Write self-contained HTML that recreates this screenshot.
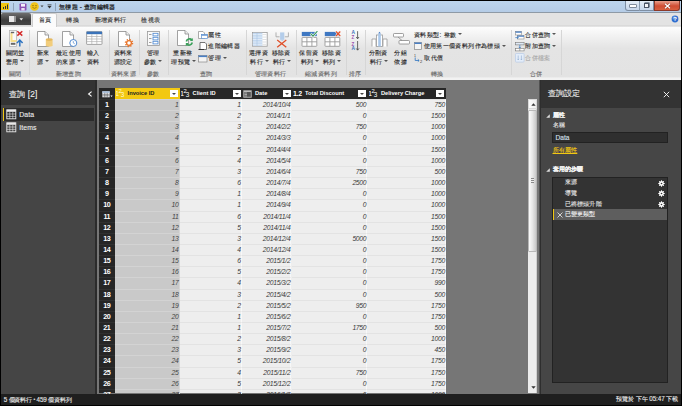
<!DOCTYPE html>
<html><head><meta charset="utf-8">
<style>
*{margin:0;padding:0;box-sizing:border-box}
html,body{width:682px;height:406px;overflow:hidden;background:#000;font-family:"Liberation Sans",sans-serif}
.a{position:absolute}
#title{left:1px;top:1px;width:680px;height:12px;background:linear-gradient(#bdd5ed,#b5cce7);border-bottom:1.2px solid #8e9aa6}
#tabs{left:1px;top:13px;width:680px;height:14px;background:linear-gradient(#e3e3e3 0,#e3e3e3 85%,#d6d6d6 86%,#e8e8e8)}
#ribbon{left:1px;top:27px;width:680px;height:53px;background:linear-gradient(#fdfdfd 0,#f3f3f3 15%,#e4e4e4 40%,#e3e3e3 95%,#f2f2f2 95.5%,#f2f2f2)}
#left{left:1px;top:80px;width:95px;height:314px;background:#454545}
#lefthd{left:1px;top:80px;width:95px;height:25px;background:#333}
#lsep{left:95px;top:80px;width:2px;height:314px;background:#2b2b2b}
#mid{left:97px;top:80px;width:442px;height:314px;background:#767676}
#right{left:541px;top:80px;width:140px;height:314px;background:#464646}
#righthd{left:541px;top:80px;width:140px;height:27.6px;background:#333}
#rsep{left:539px;top:80px;width:2px;height:314px;background:linear-gradient(90deg,#505050 50%,#2e2e2e 50%)}
#status{left:1px;top:394px;width:680px;height:10.8px;background:#1f1f1f}
#rncol{left:99px;top:88px;width:15.5px;height:305px;background:#262626}
#hdr{left:99px;top:88px;width:347px;height:11px;background:#272727}
#datacol{left:114.5px;top:99px;width:331.5px;height:294px;background:#eeeeee}
#selcol{left:114.5px;top:99px;width:65.1px;height:294px;background:#c9c9c9}
.rn{position:absolute;left:99px;width:15.5px;height:11.15px;color:#fff;font-weight:bold;font-size:7.2px;letter-spacing:-0.5px;line-height:10.5px;text-align:center;border-top:1px solid #303030}
.c{position:absolute;height:11.15px;font-style:italic;font-size:6.8px;letter-spacing:-0.3px;line-height:10.3px;color:#3a3a3a;text-align:right;padding-right:0.1px;border-top:1px solid #e3e3e3;border-right:1px solid #f8f8f8}
.c.sel{color:#444;border-top-color:#d3d3d3;border-right-color:#d6d6d6}
.hc{position:absolute;top:88px;height:11px;color:#fff;font-weight:bold;font-size:5.7px;line-height:11px;white-space:nowrap}
.dd{position:absolute;top:90px;width:8px;height:7px;background:#fff}
.dd:after{content:"";position:absolute;left:2px;top:2.5px;border-left:2px solid transparent;border-right:2px solid transparent;border-top:2px solid #444}
.t{position:absolute;white-space:nowrap;font-size:6.3px;letter-spacing:0.4px;line-height:8px;color:#2a2a2a;-webkit-text-stroke:0.12px currentColor}
.t.g{color:#6a6a6a}
.ddt{display:inline-block;width:0;height:0;border-left:2px solid transparent;border-right:2px solid transparent;border-top:2px solid #555;margin-left:1.5px;vertical-align:1.5px}
.sep{position:absolute;top:30px;width:1px;height:45px;background:#d6d6d6}
</style></head><body>
<div class="a" id="title"></div>
<div class="a" id="tabs"></div>
<div class="a" id="ribbon"></div>

<!-- title bar -->
<div class="a" style="left:1px;top:3px;width:8px;height:7px;background:#f2c811"></div>
<svg class="a" style="left:1px;top:3px" width="8" height="7"><rect x="2" y="4" width="1" height="2" fill="#333"/><rect x="4" y="3" width="1" height="3" fill="#333"/><rect x="6" y="1.5" width="1" height="4.5" fill="#333"/></svg>
<div class="a" style="left:13px;top:3px;width:1px;height:8px;background:#8fa3b8"></div>
<svg class="a" style="left:19px;top:3px" width="8" height="8"><rect x="0.5" y="0.5" width="7" height="7" rx="0.8" fill="#8b4fb3"/><rect x="2" y="1" width="4" height="2.6" fill="#f4eefa"/><rect x="2.3" y="5" width="3.4" height="2.5" fill="#e8def2"/></svg>
<svg class="a" style="left:30px;top:2px" width="9" height="9"><circle cx="4.5" cy="4.5" r="4.3" fill="#f0c419"/><circle cx="3" cy="3.6" r="0.6" fill="#7a5a00"/><circle cx="6" cy="3.6" r="0.6" fill="#7a5a00"/><path d="M2.4 5.3 Q4.5 7.4 6.6 5.3" stroke="#7a5a00" stroke-width="0.6" fill="none"/></svg>
<svg class="a" style="left:40px;top:5px" width="4" height="3"><path d="M0.5 0.5 L3.5 0.5 L2 2.3Z" fill="#444"/></svg>
<svg class="a" style="left:47px;top:4px" width="5" height="5"><rect x="0.5" y="0.5" width="4" height="0.8" fill="#333"/><path d="M0.5 2 L4.5 2 L2.5 4.5Z" fill="#333"/></svg>
<div class="a" style="left:55px;top:3px;width:1px;height:8px;background:#8fa3b8"></div>
<div class="t" style="left:59px;top:2.7px;font-size:6.4px;line-height:8px;letter-spacing:0.25px;color:#111;-webkit-text-stroke:0.18px #111">無標題 - 查詢編輯器</div>
<div class="a" style="left:625px;top:1px;width:29px;height:10px;border:1px solid #7d8ea3;border-top:none;border-radius:0 0 0 3px;background:linear-gradient(#e4edf7,#c6d6ea)"></div>
<div class="a" style="left:639px;top:1px;width:1px;height:9.5px;background:#8a9cb0"></div>
<div class="a" style="left:629.5px;top:5px;width:6px;height:2px;background:#fff;box-shadow:0 0 0 0.6px #4a5566"></div>
<div class="a" style="left:643.5px;top:2.5px;width:5.5px;height:5.5px;border:1px solid #4a5566;background:#f4f6fa;box-shadow:0.6px -0.6px 0 #4a5566"></div>
<div class="a" style="left:654px;top:1px;width:25.5px;height:10px;border:1px solid #8d3a2a;border-top:none;border-radius:0 0 3px 0;background:linear-gradient(#eaa08c,#cf4d33 55%,#d8603f)"></div>
<svg class="a" style="left:663.5px;top:2.5px" width="7" height="6"><path d="M1 0.8 L6 5.2 M6 0.8 L1 5.2" stroke="#5a2015" stroke-width="2.2" stroke-opacity="0.5"/><path d="M1 0.8 L6 5.2 M6 0.8 L1 5.2" stroke="#fff" stroke-width="1.3"/></svg>
<!-- tabs -->
<div class="a" style="left:1px;top:13px;width:30px;height:12px;background:linear-gradient(#6e6e6e,#3e3e3e 60%,#474747);border-radius:2px 2px 0 0"></div>
<div class="a" style="left:9px;top:16px;width:7px;height:6px;background:#e8e8e8;border-right:2px solid #999"></div>
<svg class="a" style="left:19px;top:18px" width="5" height="3"><path d="M0.5 0.3 L4 0.3 L2.25 2.5Z" fill="#eee"/></svg>
<div class="a" style="left:32px;top:13px;width:25px;height:14px;background:#fbfbfb;border:1px solid #cdcdcd;border-bottom:none;border-radius:2px 2px 0 0"></div>
<div class="t" style="left:38.5px;top:15.5px;font-size:6.3px;color:#333">首頁</div>
<div class="t" style="left:66.4px;top:15.5px;font-size:6.3px;color:#333">轉換</div>
<div class="t" style="left:94.6px;top:15.5px;font-size:6.3px;color:#333">新增資料行</div>
<div class="t" style="left:141.3px;top:15.5px;font-size:6.3px;color:#333">檢視表</div>
<svg class="a" style="left:671px;top:15px" width="8" height="8"><circle cx="4" cy="4" r="3.4" fill="#2f6fd0"/><circle cx="3.3" cy="3" r="1.8" fill="#8fb8f0" opacity="0.6"/><text x="4" y="6.3" font-size="6" font-weight="bold" fill="#fff" text-anchor="middle" font-family="Liberation Sans">?</text></svg>

<div class="sep" style="left:29px"></div>
<div class="sep" style="left:108.5px"></div>
<div class="sep" style="left:138.7px"></div>
<div class="sep" style="left:167.5px"></div>
<div class="sep" style="left:245.5px"></div>
<div class="sep" style="left:295.7px"></div>
<div class="sep" style="left:346.4px"></div>
<div class="sep" style="left:364.7px"></div>
<div class="sep" style="left:510.5px"></div>
<div class="sep" style="left:561.3px"></div>
<svg class="a" style="left:9px;top:30px" width="15" height="17">
<rect x="0.5" y="0.5" width="7" height="16" fill="#fafafa" stroke="#b5b5b5" stroke-width="0.8"/>
<path d="M1.5 3 L3.5 3 L3.5 10 L7.5 10 L7.5 12 L1.5 12Z" fill="#f7df8a"/>
<rect x="1.8" y="1.8" width="3.4" height="1.4" fill="#666"/>
<rect x="1.8" y="12.8" width="4.6" height="2" fill="#666"/>
<path d="M8.3 1.2 L13.3 5.6 M13.3 1.2 L8.3 5.6" stroke="#d42a2a" stroke-width="1.5"/>
<path d="M10.8 16.5 L10.8 10.5 M8 13 L10.8 10 L13.6 13" stroke="#2f74c0" stroke-width="1.5" fill="none"/>
</svg>
<div class="t" style="left:-14.8px;top:49.3px;width:60px;text-align:center;">關閉並</div>
<div class="t" style="left:-14.8px;top:57.5px;width:60px;text-align:center;">套用<span class="ddt"></span></div>
<div class="t g" style="left:-14.5px;top:69.5px;width:60px;text-align:center;">關閉</div>
<svg class="a" style="left:37px;top:30.5px" width="16" height="17">
<path d="M0.5 0.5 L8 0.5 L11.5 4 L11.5 15.5 L0.5 15.5Z" fill="#fff" stroke="#8a8a8a" stroke-width="0.8"/>
<path d="M8 0.5 L8 4 L11.5 4" fill="#eee" stroke="#8a8a8a" stroke-width="0.8"/><path d="M8.8 8.6 V15 Q12.2 16.6 15.6 15 V8.6Z" fill="#f2cd7c"/><ellipse cx="12.2" cy="8.6" rx="3.4" ry="1.3" fill="#e4b85e"/></svg>
<div class="t" style="left:13px;top:49.3px;width:60px;text-align:center;">新來</div>
<div class="t" style="left:13px;top:57.5px;width:60px;text-align:center;">源<span class="ddt"></span></div>
<svg class="a" style="left:62px;top:30.5px" width="16" height="17">
<path d="M0.5 0.5 L8 0.5 L11.5 4 L11.5 15.5 L0.5 15.5Z" fill="#fff" stroke="#8a8a8a" stroke-width="0.8"/>
<path d="M8 0.5 L8 4 L11.5 4" fill="#eee" stroke="#8a8a8a" stroke-width="0.8"/><circle cx="11.3" cy="12" r="3.5" fill="#fff" stroke="#3d7cc9" stroke-width="0.9"/><path d="M11.3 10 L11.3 12 L12.8 12.8" stroke="#3d7cc9" stroke-width="0.6" fill="none"/></svg>
<div class="t" style="left:38.599999999999994px;top:49.3px;width:60px;text-align:center;">最近使用</div>
<div class="t" style="left:38.2px;top:57.5px;width:60px;text-align:center;">的來源<span class="ddt"></span></div>
<svg class="a" style="left:85.8px;top:31px" width="17" height="14">
<rect x="0.6" y="0.6" width="15.4" height="12.8" rx="0.5" fill="#fff" stroke="#9a9a9a" stroke-width="0.9"/>
<rect x="0.6" y="0.6" width="15.4" height="2.6" fill="#3b73b9"/>
<path d="M0.6 5.5 H16 M0.6 8 H16 M0.6 10.6 H16 M5.8 3.2 V13.4 M10.8 3.2 V13.4" stroke="#b0b0b0" stroke-width="0.7"/>
</svg>
<div class="t" style="left:63.5px;top:49.3px;width:60px;text-align:center;">輸入</div>
<div class="t" style="left:63.5px;top:57.5px;width:60px;text-align:center;">資料</div>
<div class="t g" style="left:38.5px;top:69.5px;width:60px;text-align:center;">新增查詢</div>
<svg class="a" style="left:117.5px;top:30.5px" width="16" height="17">
<path d="M0.5 0.5 L8 0.5 L11.5 4 L11.5 15.5 L0.5 15.5Z" fill="#fff" stroke="#8a8a8a" stroke-width="0.8"/>
<path d="M8 0.5 L8 4 L11.5 4" fill="#eee" stroke="#8a8a8a" stroke-width="0.8"/><circle cx="11" cy="12" r="2.4" fill="#fff" stroke="#e8742a" stroke-width="1.3"/><circle cx="11" cy="12" r="3.5" fill="none" stroke="#e8742a" stroke-width="1.5" stroke-dasharray="1.3 1.45"/></svg>
<div class="t" style="left:93.3px;top:49.3px;width:60px;text-align:center;">資料來</div>
<div class="t" style="left:93.3px;top:57.5px;width:60px;text-align:center;">源設定</div>
<div class="t g" style="left:93.5px;top:69.5px;width:60px;text-align:center;">資料來源</div>
<svg class="a" style="left:147px;top:31px" width="13" height="15">
<rect x="0.5" y="0.5" width="12" height="14" fill="#fafafa" stroke="#9a9a9a" stroke-width="0.8"/>
<path d="M2 3.5 H4.5 M2 7.5 H4.5 M2 11.5 H4.5" stroke="#888" stroke-width="0.8"/>
<rect x="6" y="2.3" width="5" height="2.6" fill="#fff" stroke="#4a86d0" stroke-width="0.8"/>
<rect x="6" y="6.3" width="5" height="2.6" fill="#fff" stroke="#4a86d0" stroke-width="0.8"/>
<rect x="6" y="10.3" width="5" height="2.6" fill="#fff" stroke="#4a86d0" stroke-width="0.8"/>
</svg>
<div class="t" style="left:123.19999999999999px;top:49.3px;width:60px;text-align:center;">管理</div>
<div class="t" style="left:123.19999999999999px;top:57.5px;width:60px;text-align:center;">參數<span class="ddt"></span></div>
<div class="t g" style="left:123.5px;top:69.5px;width:60px;text-align:center;">參數</div>
<svg class="a" style="left:176.5px;top:30px" width="16" height="17">
<path d="M0.5 0.5 L8 0.5 L11.5 4 L11.5 15.5 L0.5 15.5Z" fill="#fff" stroke="#8a8a8a" stroke-width="0.8"/>
<path d="M8 0.5 L8 4 L11.5 4" fill="#eee" stroke="#8a8a8a" stroke-width="0.8"/><path d="M9.3 11.5 A3.3 3.3 0 0 1 15 10 M15.3 12.5 A3.3 3.3 0 0 1 9.6 14" stroke="#3aa05a" stroke-width="1.6" fill="none"/><path d="M15.8 8 L15.8 11 L12.8 11Z M8.8 16.3 L8.8 13 L11.8 13Z" fill="#3aa05a"/></svg>
<div class="t" style="left:153px;top:49.3px;width:60px;text-align:center;">重新整</div>
<div class="t" style="left:153.5px;top:57.5px;width:60px;text-align:center;">理預覽<span class="ddt"></span></div>
<svg class="a" style="left:198px;top:31px" width="10" height="8"><path d="M0.5 0.5 H5 L6.5 2 V7.5 H0.5Z" fill="#fff" stroke="#888" stroke-width="0.7"/><rect x="3.5" y="3.5" width="6" height="4" fill="#fff" stroke="#5b8fd0" stroke-width="0.7"/><rect x="3.5" y="3.5" width="6" height="1.2" fill="#5b8fd0"/></svg>
<div class="t" style="left:208.3px;top:30.5px">屬性</div>
<svg class="a" style="left:198px;top:42px" width="10" height="8"><path d="M2 0.5 H7 L8.5 2 V7.5 H2Z" fill="#fff" stroke="#555" stroke-width="0.8"/><path d="M0.5 7.5 H6" stroke="#333" stroke-width="1"/></svg>
<div class="t" style="left:208.3px;top:41.7px">進階編輯器</div>
<svg class="a" style="left:198px;top:54.5px" width="10" height="8"><rect x="0.5" y="0.5" width="8.5" height="6.5" fill="#f4f4f4" stroke="#888" stroke-width="0.7"/><rect x="0.5" y="0.5" width="8.5" height="1.6" fill="#4a7fc4"/></svg>
<div class="t" style="left:208.3px;top:54px">管理<span class="ddt"></span></div>
<div class="t g" style="left:176.3px;top:69.5px;width:60px;text-align:center;">查詢</div>
<svg class="a" style="left:251.5px;top:31.5px" width="16" height="15">
<rect x="0.4" y="0.4" width="14.8" height="13.8" fill="#fff" stroke="#9a9a9a" stroke-width="0.8"/>
<rect x="0.8" y="0.8" width="9.6" height="13" fill="#c3d8f0"/>
<path d="M0.8 2.6 H14.8 M0.8 5.1 H14.8 M0.8 7.5 H14.8 M0.8 10 H14.8 M0.8 12.3 H14.8" stroke="#f4f8fd" stroke-width="0.6"/>
<path d="M10.4 2.6 H14.8 M10.4 5.1 H14.8 M10.4 7.5 H14.8 M10.4 10 H14.8 M10.4 12.3 H14.8" stroke="#d0d0d0" stroke-width="0.6"/>
<path d="M5 0.8 V13.8" stroke="#a9c2e0" stroke-width="0.6"/>
</svg>
<div class="t" style="left:228.7px;top:49.3px;width:60px;text-align:center;">選擇資</div>
<div class="t" style="left:229.5px;top:57.5px;width:60px;text-align:center;">料行<span class="ddt"></span></div>
<svg class="a" style="left:274.5px;top:30.5px" width="15" height="17">
<path d="M1 1.4 V5.8 H4.6 M13.4 1.4 V5.8 H9.8" stroke="#a8a8a8" stroke-width="0.9" fill="none"/>
<rect x="5.1" y="1.4" width="4.2" height="7" fill="#b4cdea"/>
<path d="M4.6 8.2 H9.8 L7.2 10Z" fill="#b4cdea"/>
<path d="M2.2 9 L11.3 16.2 M11.3 9 L2.2 16.2" stroke="#e0502a" stroke-width="1.3"/>
</svg>
<div class="t" style="left:251.2px;top:49.3px;width:60px;text-align:center;">移除資</div>
<div class="t" style="left:252px;top:57.5px;width:60px;text-align:center;">料行<span class="ddt"></span></div>
<div class="t g" style="left:240.5px;top:69.5px;width:60px;text-align:center;">管理資料行</div>
<svg class="a" style="left:301.3px;top:30.5px" width="17" height="16">
<rect x="0.8" y="0.9" width="15" height="4.2" fill="#3f78c2"/>
<rect x="1" y="6.4" width="14.8" height="8.9" rx="0.6" fill="#fff" stroke="#9a9a9a" stroke-width="0.9"/>
<path d="M1 10.8 H15.8 M5.9 6.4 V15.3 M10.9 6.4 V15.3" stroke="#9a9a9a" stroke-width="0.9"/><path d="M9.6 2.6 L12 5.2 L16.4 0.2" stroke="#fff" stroke-width="2.4" fill="none"/><path d="M9.6 2.6 L12 5.2 L16.4 0.2" stroke="#3a9a60" stroke-width="1.2" fill="none"/></svg>
<div class="t" style="left:278.9px;top:49.3px;width:60px;text-align:center;">保留資</div>
<div class="t" style="left:279.7px;top:57.5px;width:60px;text-align:center;">料列<span class="ddt"></span></div>
<svg class="a" style="left:323.5px;top:30.5px" width="17" height="16">
<rect x="0.8" y="0.9" width="15" height="4.2" fill="#3f78c2"/>
<rect x="1" y="6.4" width="14.8" height="8.9" rx="0.6" fill="#fff" stroke="#9a9a9a" stroke-width="0.9"/>
<path d="M1 10.8 H15.8 M5.9 6.4 V15.3 M10.9 6.4 V15.3" stroke="#9a9a9a" stroke-width="0.9"/><path d="M12 0.5 L16.3 5 M16.3 0.5 L12 5" stroke="#fff" stroke-width="2.2"/><path d="M12 0.5 L16.3 5 M16.3 0.5 L12 5" stroke="#e0502a" stroke-width="1.2"/></svg>
<div class="t" style="left:301.4px;top:49.3px;width:60px;text-align:center;">移除資</div>
<div class="t" style="left:302.2px;top:57.5px;width:60px;text-align:center;">料列<span class="ddt"></span></div>
<div class="t g" style="left:291px;top:69.5px;width:60px;text-align:center;">縮減資料列</div>
<svg class="a" style="left:351px;top:29.5px" width="9" height="21">
<text x="0.4" y="4.3" font-size="4.8" fill="#3a6fb8" font-family="Liberation Sans" font-weight="bold">A</text>
<text x="0.6" y="8.6" font-size="4.6" fill="#9a4fb0" font-family="Liberation Sans" font-weight="bold">Z</text>
<path d="M6.6 1.2 V8.6 M5.2 7 L6.6 8.8 L8 7" stroke="#444" stroke-width="0.8" fill="none"/>
<text x="0.6" y="15.6" font-size="4.6" fill="#9a4fb0" font-family="Liberation Sans" font-weight="bold">Z</text>
<text x="0.4" y="20.2" font-size="4.8" fill="#3a6fb8" font-family="Liberation Sans" font-weight="bold">A</text>
<path d="M6.6 11 V20 M5.2 18.4 L6.6 20.2 L8 18.4" stroke="#444" stroke-width="0.8" fill="none"/>
</svg>
<div class="t g" style="left:325.3px;top:69.5px;width:60px;text-align:center;">排序</div>
<svg class="a" style="left:370.5px;top:30.5px" width="17" height="16">
<path d="M1 15.5 V8 H5 V15.5 M12 15.5 V8 H16 V15.5" stroke="#999" stroke-width="0.8" fill="#fff"/>
<rect x="5.5" y="4" width="6" height="11.5" fill="#fff" stroke="#999" stroke-width="0.8"/>
<rect x="7.2" y="3" width="2.6" height="12.5" fill="#a9c7ea"/>
<path d="M7.2 2.5 L8.5 0.8 L9.8 2.5Z" fill="#3f78c2"/>
</svg>
<div class="t" style="left:348.2px;top:49.3px;width:60px;text-align:center;">分割資</div>
<div class="t" style="left:348.8px;top:57.5px;width:60px;text-align:center;">料行<span class="ddt"></span></div>
<svg class="a" style="left:392.5px;top:32.5px" width="17" height="12">
<rect x="0.5" y="0.5" width="10" height="3.5" rx="0.8" fill="#fff" stroke="#888" stroke-width="0.8"/>
<rect x="6" y="7.5" width="10.5" height="3.5" rx="0.8" fill="#fff" stroke="#888" stroke-width="0.8"/>
<path d="M5 4 L9 7.5" stroke="#888" stroke-width="0.8"/>
</svg>
<div class="t" style="left:370.6px;top:49.3px;width:60px;text-align:center;">分組</div>
<div class="t" style="left:370.6px;top:57.5px;width:60px;text-align:center;">依據</div>
<div class="t" style="left:413.8px;top:30.7px">資料類型: 整數<span class="ddt"></span></div>
<svg class="a" style="left:413.8px;top:42.3px" width="8" height="8"><rect x="0.5" y="0.5" width="7" height="7" fill="#f4f4f4" stroke="#888" stroke-width="0.7"/><rect x="0.5" y="0.5" width="7" height="1.5" fill="#4a7fc4"/></svg>
<div class="t" style="left:423.5px;top:42px">使用第一個資料列作為標頭<span class="ddt"></span></div>
<svg class="a" style="left:413.5px;top:53.5px" width="10" height="9"><text x="0" y="3" font-size="3.5" fill="#333" font-family="Liberation Sans">1</text><path d="M1.2 3.5 V6.5 H5 M3.8 5.3 L5.2 6.5 L3.8 7.7" stroke="#2f74c0" stroke-width="0.8" fill="none"/><text x="6" y="8.5" font-size="4" fill="#333" font-family="Liberation Sans">2</text></svg>
<div class="t" style="left:424.4px;top:54px">取代值</div>
<div class="t g" style="left:407.5px;top:69.5px;width:60px;text-align:center;">轉換</div>
<svg class="a" style="left:515px;top:30.5px" width="10" height="9"><rect x="0.5" y="0.5" width="6" height="3.5" fill="#fff" stroke="#888" stroke-width="0.6"/><rect x="0.5" y="0.5" width="6" height="1.2" fill="#3f78c2"/><rect x="2.6" y="4.6" width="6.4" height="3.4" fill="#fff" stroke="#888" stroke-width="0.6"/><rect x="2.6" y="4.6" width="6.4" height="1.1" fill="#3f78c2"/><path d="M0.3 6.6 H3.3 M2.2 5.5 L3.4 6.6 L2.2 7.7" stroke="#2f74c0" stroke-width="0.7" fill="none"/></svg>
<div class="t" style="left:525.2px;top:30.7px">合併查詢<span class="ddt"></span></div>
<svg class="a" style="left:515px;top:41.5px" width="10" height="10"><rect x="0.5" y="0.5" width="8.6" height="2.4" fill="#dfe9f6" stroke="#777" stroke-width="0.6"/><rect x="0.5" y="6.3" width="8.6" height="2.6" fill="#fff" stroke="#777" stroke-width="0.6"/><path d="M4.8 6.3 V8.9" stroke="#777" stroke-width="0.6"/><path d="M4.8 2.9 V6 M3.8 4.9 L4.8 6 L5.8 4.9" stroke="#2f74c0" stroke-width="0.7" fill="none"/></svg>
<div class="t" style="left:525.2px;top:42.2px">附加查詢<span class="ddt"></span></div>
<svg class="a" style="left:515px;top:53px" width="10" height="10"><rect x="0.5" y="0.5" width="8.6" height="8.6" rx="0.8" fill="#e4edf9" stroke="#b7cbe6" stroke-width="0.7"/><path d="M3.2 2.5 V6.8 M2.3 5.9 L3.2 6.8 L4.1 5.9 M6.4 2.5 V6.8 M5.5 5.9 L6.4 6.8 L7.3 5.9" stroke="#7d9cc4" stroke-width="0.5" fill="none"/></svg>
<div class="t" style="left:525.2px;top:54px;color:#a8a8a8">合併檔案</div>
<div class="t g" style="left:506px;top:69.5px;width:60px;text-align:center;">合併</div>
<div class="a" id="mid"></div>
<div class="a" id="left"></div>
<div class="a" id="lefthd"></div>
<div class="a" id="lsep"></div>
<div class="a" id="right"></div>
<div class="a" id="righthd"></div>
<div class="a" id="rsep"></div>

<!-- table -->
<div class="a" id="rncol"></div>
<div class="a" id="hdr"></div>
<div class="a" style="left:114.5px;top:88px;width:65.1px;height:11px;background:#f2c811"></div>
<div class="a" id="datacol"></div>
<div class="a" id="selcol"></div>
<div class="rn" style="top:99.00px">1</div>
<div class="c sel" style="top:99.00px;left:114.5px;width:65.1px">1</div>
<div class="c" style="top:99.00px;left:179.6px;width:62.2px">1</div>
<div class="c" style="top:99.00px;left:241.8px;width:49.7px">2014/10/4</div>
<div class="c" style="top:99.00px;left:291.5px;width:75.9px">500</div>
<div class="c" style="top:99.00px;left:367.4px;width:78.6px">750</div>
<div class="rn" style="top:110.15px">2</div>
<div class="c sel" style="top:110.15px;left:114.5px;width:65.1px">2</div>
<div class="c" style="top:110.15px;left:179.6px;width:62.2px">2</div>
<div class="c" style="top:110.15px;left:241.8px;width:49.7px">2014/1/1</div>
<div class="c" style="top:110.15px;left:291.5px;width:75.9px">0</div>
<div class="c" style="top:110.15px;left:367.4px;width:78.6px">1500</div>
<div class="rn" style="top:121.30px">3</div>
<div class="c sel" style="top:121.30px;left:114.5px;width:65.1px">3</div>
<div class="c" style="top:121.30px;left:179.6px;width:62.2px">3</div>
<div class="c" style="top:121.30px;left:241.8px;width:49.7px">2014/2/2</div>
<div class="c" style="top:121.30px;left:291.5px;width:75.9px">750</div>
<div class="c" style="top:121.30px;left:367.4px;width:78.6px">1000</div>
<div class="rn" style="top:132.45px">4</div>
<div class="c sel" style="top:132.45px;left:114.5px;width:65.1px">4</div>
<div class="c" style="top:132.45px;left:179.6px;width:62.2px">2</div>
<div class="c" style="top:132.45px;left:241.8px;width:49.7px">2014/3/3</div>
<div class="c" style="top:132.45px;left:291.5px;width:75.9px">0</div>
<div class="c" style="top:132.45px;left:367.4px;width:78.6px">1000</div>
<div class="rn" style="top:143.60px">5</div>
<div class="c sel" style="top:143.60px;left:114.5px;width:65.1px">5</div>
<div class="c" style="top:143.60px;left:179.6px;width:62.2px">5</div>
<div class="c" style="top:143.60px;left:241.8px;width:49.7px">2014/4/4</div>
<div class="c" style="top:143.60px;left:291.5px;width:75.9px">0</div>
<div class="c" style="top:143.60px;left:367.4px;width:78.6px">1500</div>
<div class="rn" style="top:154.75px">6</div>
<div class="c sel" style="top:154.75px;left:114.5px;width:65.1px">6</div>
<div class="c" style="top:154.75px;left:179.6px;width:62.2px">4</div>
<div class="c" style="top:154.75px;left:241.8px;width:49.7px">2014/5/4</div>
<div class="c" style="top:154.75px;left:291.5px;width:75.9px">0</div>
<div class="c" style="top:154.75px;left:367.4px;width:78.6px">1000</div>
<div class="rn" style="top:165.90px">7</div>
<div class="c sel" style="top:165.90px;left:114.5px;width:65.1px">7</div>
<div class="c" style="top:165.90px;left:179.6px;width:62.2px">3</div>
<div class="c" style="top:165.90px;left:241.8px;width:49.7px">2014/6/4</div>
<div class="c" style="top:165.90px;left:291.5px;width:75.9px">750</div>
<div class="c" style="top:165.90px;left:367.4px;width:78.6px">500</div>
<div class="rn" style="top:177.05px">8</div>
<div class="c sel" style="top:177.05px;left:114.5px;width:65.1px">8</div>
<div class="c" style="top:177.05px;left:179.6px;width:62.2px">6</div>
<div class="c" style="top:177.05px;left:241.8px;width:49.7px">2014/7/4</div>
<div class="c" style="top:177.05px;left:291.5px;width:75.9px">2500</div>
<div class="c" style="top:177.05px;left:367.4px;width:78.6px">1000</div>
<div class="rn" style="top:188.20px">9</div>
<div class="c sel" style="top:188.20px;left:114.5px;width:65.1px">9</div>
<div class="c" style="top:188.20px;left:179.6px;width:62.2px">1</div>
<div class="c" style="top:188.20px;left:241.8px;width:49.7px">2014/8/4</div>
<div class="c" style="top:188.20px;left:291.5px;width:75.9px">0</div>
<div class="c" style="top:188.20px;left:367.4px;width:78.6px">1000</div>
<div class="rn" style="top:199.35px">10</div>
<div class="c sel" style="top:199.35px;left:114.5px;width:65.1px">10</div>
<div class="c" style="top:199.35px;left:179.6px;width:62.2px">1</div>
<div class="c" style="top:199.35px;left:241.8px;width:49.7px">2014/9/4</div>
<div class="c" style="top:199.35px;left:291.5px;width:75.9px">0</div>
<div class="c" style="top:199.35px;left:367.4px;width:78.6px">1000</div>
<div class="rn" style="top:210.50px">11</div>
<div class="c sel" style="top:210.50px;left:114.5px;width:65.1px">11</div>
<div class="c" style="top:210.50px;left:179.6px;width:62.2px">6</div>
<div class="c" style="top:210.50px;left:241.8px;width:49.7px">2014/11/4</div>
<div class="c" style="top:210.50px;left:291.5px;width:75.9px">0</div>
<div class="c" style="top:210.50px;left:367.4px;width:78.6px">1500</div>
<div class="rn" style="top:221.65px">12</div>
<div class="c sel" style="top:221.65px;left:114.5px;width:65.1px">12</div>
<div class="c" style="top:221.65px;left:179.6px;width:62.2px">5</div>
<div class="c" style="top:221.65px;left:241.8px;width:49.7px">2014/11/4</div>
<div class="c" style="top:221.65px;left:291.5px;width:75.9px">0</div>
<div class="c" style="top:221.65px;left:367.4px;width:78.6px">1500</div>
<div class="rn" style="top:232.80px">13</div>
<div class="c sel" style="top:232.80px;left:114.5px;width:65.1px">13</div>
<div class="c" style="top:232.80px;left:179.6px;width:62.2px">3</div>
<div class="c" style="top:232.80px;left:241.8px;width:49.7px">2014/12/4</div>
<div class="c" style="top:232.80px;left:291.5px;width:75.9px">5000</div>
<div class="c" style="top:232.80px;left:367.4px;width:78.6px">1500</div>
<div class="rn" style="top:243.95px">14</div>
<div class="c sel" style="top:243.95px;left:114.5px;width:65.1px">14</div>
<div class="c" style="top:243.95px;left:179.6px;width:62.2px">4</div>
<div class="c" style="top:243.95px;left:241.8px;width:49.7px">2014/12/4</div>
<div class="c" style="top:243.95px;left:291.5px;width:75.9px">0</div>
<div class="c" style="top:243.95px;left:367.4px;width:78.6px">1500</div>
<div class="rn" style="top:255.10px">15</div>
<div class="c sel" style="top:255.10px;left:114.5px;width:65.1px">15</div>
<div class="c" style="top:255.10px;left:179.6px;width:62.2px">6</div>
<div class="c" style="top:255.10px;left:241.8px;width:49.7px">2015/1/2</div>
<div class="c" style="top:255.10px;left:291.5px;width:75.9px">0</div>
<div class="c" style="top:255.10px;left:367.4px;width:78.6px">1750</div>
<div class="rn" style="top:266.25px">16</div>
<div class="c sel" style="top:266.25px;left:114.5px;width:65.1px">16</div>
<div class="c" style="top:266.25px;left:179.6px;width:62.2px">5</div>
<div class="c" style="top:266.25px;left:241.8px;width:49.7px">2015/2/2</div>
<div class="c" style="top:266.25px;left:291.5px;width:75.9px">0</div>
<div class="c" style="top:266.25px;left:367.4px;width:78.6px">1750</div>
<div class="rn" style="top:277.40px">17</div>
<div class="c sel" style="top:277.40px;left:114.5px;width:65.1px">17</div>
<div class="c" style="top:277.40px;left:179.6px;width:62.2px">4</div>
<div class="c" style="top:277.40px;left:241.8px;width:49.7px">2015/3/2</div>
<div class="c" style="top:277.40px;left:291.5px;width:75.9px">0</div>
<div class="c" style="top:277.40px;left:367.4px;width:78.6px">990</div>
<div class="rn" style="top:288.55px">18</div>
<div class="c sel" style="top:288.55px;left:114.5px;width:65.1px">18</div>
<div class="c" style="top:288.55px;left:179.6px;width:62.2px">3</div>
<div class="c" style="top:288.55px;left:241.8px;width:49.7px">2015/4/2</div>
<div class="c" style="top:288.55px;left:291.5px;width:75.9px">0</div>
<div class="c" style="top:288.55px;left:367.4px;width:78.6px">500</div>
<div class="rn" style="top:299.70px">19</div>
<div class="c sel" style="top:299.70px;left:114.5px;width:65.1px">19</div>
<div class="c" style="top:299.70px;left:179.6px;width:62.2px">2</div>
<div class="c" style="top:299.70px;left:241.8px;width:49.7px">2015/5/2</div>
<div class="c" style="top:299.70px;left:291.5px;width:75.9px">950</div>
<div class="c" style="top:299.70px;left:367.4px;width:78.6px">1750</div>
<div class="rn" style="top:310.85px">20</div>
<div class="c sel" style="top:310.85px;left:114.5px;width:65.1px">20</div>
<div class="c" style="top:310.85px;left:179.6px;width:62.2px">1</div>
<div class="c" style="top:310.85px;left:241.8px;width:49.7px">2015/6/2</div>
<div class="c" style="top:310.85px;left:291.5px;width:75.9px">0</div>
<div class="c" style="top:310.85px;left:367.4px;width:78.6px">1750</div>
<div class="rn" style="top:322.00px">21</div>
<div class="c sel" style="top:322.00px;left:114.5px;width:65.1px">21</div>
<div class="c" style="top:322.00px;left:179.6px;width:62.2px">1</div>
<div class="c" style="top:322.00px;left:241.8px;width:49.7px">2015/7/2</div>
<div class="c" style="top:322.00px;left:291.5px;width:75.9px">1750</div>
<div class="c" style="top:322.00px;left:367.4px;width:78.6px">500</div>
<div class="rn" style="top:333.15px">22</div>
<div class="c sel" style="top:333.15px;left:114.5px;width:65.1px">22</div>
<div class="c" style="top:333.15px;left:179.6px;width:62.2px">2</div>
<div class="c" style="top:333.15px;left:241.8px;width:49.7px">2015/8/2</div>
<div class="c" style="top:333.15px;left:291.5px;width:75.9px">0</div>
<div class="c" style="top:333.15px;left:367.4px;width:78.6px">1000</div>
<div class="rn" style="top:344.30px">23</div>
<div class="c sel" style="top:344.30px;left:114.5px;width:65.1px">23</div>
<div class="c" style="top:344.30px;left:179.6px;width:62.2px">3</div>
<div class="c" style="top:344.30px;left:241.8px;width:49.7px">2015/9/2</div>
<div class="c" style="top:344.30px;left:291.5px;width:75.9px">0</div>
<div class="c" style="top:344.30px;left:367.4px;width:78.6px">450</div>
<div class="rn" style="top:355.45px">24</div>
<div class="c sel" style="top:355.45px;left:114.5px;width:65.1px">24</div>
<div class="c" style="top:355.45px;left:179.6px;width:62.2px">5</div>
<div class="c" style="top:355.45px;left:241.8px;width:49.7px">2015/10/2</div>
<div class="c" style="top:355.45px;left:291.5px;width:75.9px">0</div>
<div class="c" style="top:355.45px;left:367.4px;width:78.6px">1750</div>
<div class="rn" style="top:366.60px">25</div>
<div class="c sel" style="top:366.60px;left:114.5px;width:65.1px">25</div>
<div class="c" style="top:366.60px;left:179.6px;width:62.2px">4</div>
<div class="c" style="top:366.60px;left:241.8px;width:49.7px">2015/11/2</div>
<div class="c" style="top:366.60px;left:291.5px;width:75.9px">750</div>
<div class="c" style="top:366.60px;left:367.4px;width:78.6px">1750</div>
<div class="rn" style="top:377.75px">26</div>
<div class="c sel" style="top:377.75px;left:114.5px;width:65.1px">26</div>
<div class="c" style="top:377.75px;left:179.6px;width:62.2px">5</div>
<div class="c" style="top:377.75px;left:241.8px;width:49.7px">2015/12/2</div>
<div class="c" style="top:377.75px;left:291.5px;width:75.9px">0</div>
<div class="c" style="top:377.75px;left:367.4px;width:78.6px">1750</div>
<div class="rn" style="top:388.90px">27</div>
<div class="c sel" style="top:388.90px;left:114.5px;width:65.1px">27</div>
<div class="c" style="top:388.90px;left:179.6px;width:62.2px">2</div>
<div class="c" style="top:388.90px;left:241.8px;width:49.7px">2016/1/2</div>
<div class="c" style="top:388.90px;left:291.5px;width:75.9px">0</div>
<div class="c" style="top:388.90px;left:367.4px;width:78.6px">1000</div>
<div class="hc" style="left:127.6px;color:#222">Invoice ID</div>
<div class="hc" style="left:192.6px">Client ID</div>
<div class="hc" style="left:255px">Date</div>
<div class="hc" style="left:305px">Total Discount</div>
<div class="hc" style="left:381px">Delivery Charge</div>
<div class="dd" style="left:170px"></div>
<div class="dd" style="left:232.6px"></div>
<div class="dd" style="left:282.5px"></div>
<div class="dd" style="left:357.5px"></div>
<div class="dd" style="left:436px"></div>

<div class="a" id="status"></div>

<!-- left panel -->
<div class="t" style="left:8.8px;top:88.5px;font-size:8.4px;line-height:10px;letter-spacing:0.2px;color:#f0f0f0">查詢 [2]</div>
<svg class="a" style="left:87px;top:91px" width="6" height="6"><path d="M4.6 0.6 L1.6 3 L4.6 5.4" stroke="#fff" stroke-width="1.1" fill="none"/></svg>
<div class="a" style="left:2.7px;top:107.5px;width:91.5px;height:13px;background:#2b2b2b"></div>
<div class="a" style="left:2.7px;top:107.5px;width:1.4px;height:13px;background:#f2c811"></div>
<svg class="a" style="left:6px;top:109px" width="11" height="11"><rect x="0.8" y="0.8" width="9" height="9" fill="none" stroke="#e8e8e8" stroke-width="0.9"/><rect x="0.8" y="0.8" width="9" height="2" fill="#e8e8e8"/><path d="M0.8 5 H9.8 M0.8 7.4 H9.8 M3.8 2.8 V9.8 M6.8 2.8 V9.8" stroke="#e8e8e8" stroke-width="0.6"/></svg>
<div class="t" style="left:19.2px;top:109.5px;font-size:6.9px;line-height:10px;letter-spacing:0.1px;color:#eaeaea">Data</div>
<svg class="a" style="left:6px;top:122px" width="11" height="11"><rect x="0.8" y="0.8" width="9" height="9" fill="none" stroke="#e8e8e8" stroke-width="0.9"/><rect x="0.8" y="0.8" width="9" height="2" fill="#e8e8e8"/><path d="M0.8 5 H9.8 M0.8 7.4 H9.8 M3.8 2.8 V9.8 M6.8 2.8 V9.8" stroke="#e8e8e8" stroke-width="0.6"/></svg>
<div class="t" style="left:19.2px;top:122.5px;font-size:6.9px;line-height:10px;letter-spacing:0.1px;color:#eaeaea">Items</div>

<!-- right panel -->
<div class="t" style="left:548px;top:88px;font-size:8.4px;line-height:10px;letter-spacing:0.1px;color:#f0f0f0">查詢設定</div>
<svg class="a" style="left:662.5px;top:91px" width="7" height="7"><path d="M0.8 0.8 L6.2 6.2 M6.2 0.8 L0.8 6.2" stroke="#fff" stroke-width="0.9"/></svg>
<svg class="a" style="left:545.5px;top:114px" width="4" height="4"><path d="M3.8 0.2 V3.8 H0.2Z" fill="#ddd"/></svg>
<div class="t" style="left:552.5px;top:111px;font-weight:bold;color:#f4f4f4;letter-spacing:0.2px">屬性</div>
<div class="t" style="left:552.5px;top:121.3px;color:#e8e8e8;letter-spacing:0.2px">名稱</div>
<div class="a" style="left:552px;top:131.7px;width:116px;height:11.6px;background:#2f2f2f;border:1px solid #222"></div>
<div class="t" style="left:555.6px;top:134px;font-size:6.6px;letter-spacing:0;color:#d8e0ee">Data</div>
<div class="t" style="left:552.5px;top:146px;color:#f2c811;text-decoration:underline;letter-spacing:0.2px">所有屬性</div>
<svg class="a" style="left:545.5px;top:168px" width="4" height="4"><path d="M3.8 0.2 V3.8 H0.2Z" fill="#ddd"/></svg>
<div class="t" style="left:552.5px;top:164.5px;font-weight:bold;color:#f4f4f4;letter-spacing:0.2px">套用的步驟</div>
<div class="a" style="left:552px;top:176.9px;width:116px;height:206px;background:#333;border:1px solid #222"></div>
<div class="t" style="left:564.6px;top:178px;color:#e4e4e4;letter-spacing:0.2px">來源</div>
<div class="t" style="left:564.6px;top:189px;color:#e4e4e4;letter-spacing:0.2px">導覽</div>
<div class="t" style="left:564.6px;top:199.5px;color:#e4e4e4;letter-spacing:0.2px">已將標頭升階</div>
<div class="a" style="left:553px;top:209px;width:114px;height:10.6px;background:#5e5e5e"></div>
<div class="a" style="left:553px;top:209px;width:1.2px;height:10.6px;background:#f2c811"></div>
<svg class="a" style="left:556.5px;top:211.5px" width="6" height="6"><path d="M0.5 0.5 L5.5 5.5 M5.5 0.5 L0.5 5.5" stroke="#eee" stroke-width="0.8"/></svg>
<div class="t" style="left:564.6px;top:210.3px;color:#f0f0f0;letter-spacing:0.2px">已變更類型</div>
<svg class="a" style="left:657.5px;top:179.5px" width="7" height="7"><circle cx="3.5" cy="3.5" r="1.8" fill="none" stroke="#fff" stroke-width="1.3"/><path d="M3.5 0.3 V6.7 M0.3 3.5 H6.7 M1.2 1.2 L5.8 5.8 M5.8 1.2 L1.2 5.8" stroke="#fff" stroke-width="1"/><circle cx="3.5" cy="3.5" r="0.8" fill="#333"/></svg>
<svg class="a" style="left:657.5px;top:190.3px" width="7" height="7"><circle cx="3.5" cy="3.5" r="1.8" fill="none" stroke="#fff" stroke-width="1.3"/><path d="M3.5 0.3 V6.7 M0.3 3.5 H6.7 M1.2 1.2 L5.8 5.8 M5.8 1.2 L1.2 5.8" stroke="#fff" stroke-width="1"/><circle cx="3.5" cy="3.5" r="0.8" fill="#333"/></svg>
<svg class="a" style="left:657.5px;top:201px" width="7" height="7"><circle cx="3.5" cy="3.5" r="1.8" fill="none" stroke="#fff" stroke-width="1.3"/><path d="M3.5 0.3 V6.7 M0.3 3.5 H6.7 M1.2 1.2 L5.8 5.8 M5.8 1.2 L1.2 5.8" stroke="#fff" stroke-width="1"/><circle cx="3.5" cy="3.5" r="0.8" fill="#333"/></svg>

<div class="a" style="left:528px;top:99px;width:9.2px;height:294px;background:#ececec;border-right:1px solid #d0d0d0"></div>
<div class="a" style="left:528px;top:99px;width:9.2px;height:10px;background:linear-gradient(90deg,#fcfcfc,#eeeeee);border:1px solid #dadada"></div>
<svg class="a" style="left:530.5px;top:102.5px" width="5" height="3"><path d="M0.3 2.7 L4.7 2.7 L2.5 0.3Z" fill="#333"/></svg>
<div class="a" style="left:528px;top:109.8px;width:9.2px;height:142px;background:linear-gradient(90deg,#fbfbfb,#e6e6e6 50%,#c9c9c9);border:0.8px solid #b8b8b8;border-radius:1px"></div>
<div class="a" style="left:530.8px;top:177.5px;width:3.6px;height:5px;background:repeating-linear-gradient(#888 0 1px,#eee 1px 2px)"></div>
<svg class="a" style="left:530.5px;top:386px" width="5" height="3"><path d="M0.3 0.3 L4.7 0.3 L2.5 2.7Z" fill="#333"/></svg>
<!-- table header icons -->
<svg class="a" style="left:101.5px;top:91px" width="11" height="7"><rect x="0.3" y="0.3" width="7.4" height="6" fill="#f4f6fa"/><rect x="0.3" y="0.3" width="7.4" height="1.5" fill="#9fb8d8"/><path d="M0.3 3.3 H7.7 M0.3 4.8 H7.7 M2.8 1.8 V6.3 M5.2 1.8 V6.3" stroke="#262626" stroke-width="0.45"/><path d="M8.4 4.6 L10.6 4.6 L9.5 6Z" fill="#fff"/></svg>
<svg class="a" style="left:116.0px;top:88px" width="10" height="11"><text x="-0.9" y="8.1" font-size="7.4" fill="#fff8d8" font-family="Liberation Sans">1</text><text x="2.5" y="4.8" font-size="5.8" fill="#fff8d8" font-family="Liberation Sans">2</text><text x="4.8" y="9.3" font-size="6.3" fill="#fff8d8" font-family="Liberation Sans">3</text></svg>
<svg class="a" style="left:180.7px;top:88px" width="10" height="11"><text x="-0.9" y="8.1" font-size="7.4" fill="#fff" font-family="Liberation Sans">1</text><text x="2.5" y="4.8" font-size="5.8" fill="#fff" font-family="Liberation Sans">2</text><text x="4.8" y="9.3" font-size="6.3" fill="#fff" font-family="Liberation Sans">3</text></svg>
<svg class="a" style="left:369.3px;top:88px" width="10" height="11"><text x="-0.9" y="8.1" font-size="7.4" fill="#fff" font-family="Liberation Sans">1</text><text x="2.5" y="4.8" font-size="5.8" fill="#fff" font-family="Liberation Sans">2</text><text x="4.8" y="9.3" font-size="6.3" fill="#fff" font-family="Liberation Sans">3</text></svg>
<svg class="a" style="left:243.3px;top:90px" width="9" height="8"><rect x="0.3" y="0.3" width="8.4" height="7.4" fill="#bbb"/><rect x="1.2" y="2" width="6.6" height="4.8" fill="#555"/><path d="M1.5 3 H4 M1.5 4.5 H4 M1.5 6 H4" stroke="#ddd" stroke-width="0.6"/></svg>
<div class="hc" style="left:293px;font-size:7px;font-weight:bold;letter-spacing:-0.3px">1.2</div>

<div class="t" style="left:3.7px;top:394.5px;color:#e8e8e8;letter-spacing:-0.15px">5 個資料行<span style="font-size:5px;letter-spacing:0;vertical-align:0.5px"> • </span>459 個資料列</div>
<div class="t" style="left:598px;top:394.5px;width:80px;text-align:right;color:#e8e8e8;letter-spacing:-0.1px">預覽於 下午 05:47 下載</div>
</body></html>
